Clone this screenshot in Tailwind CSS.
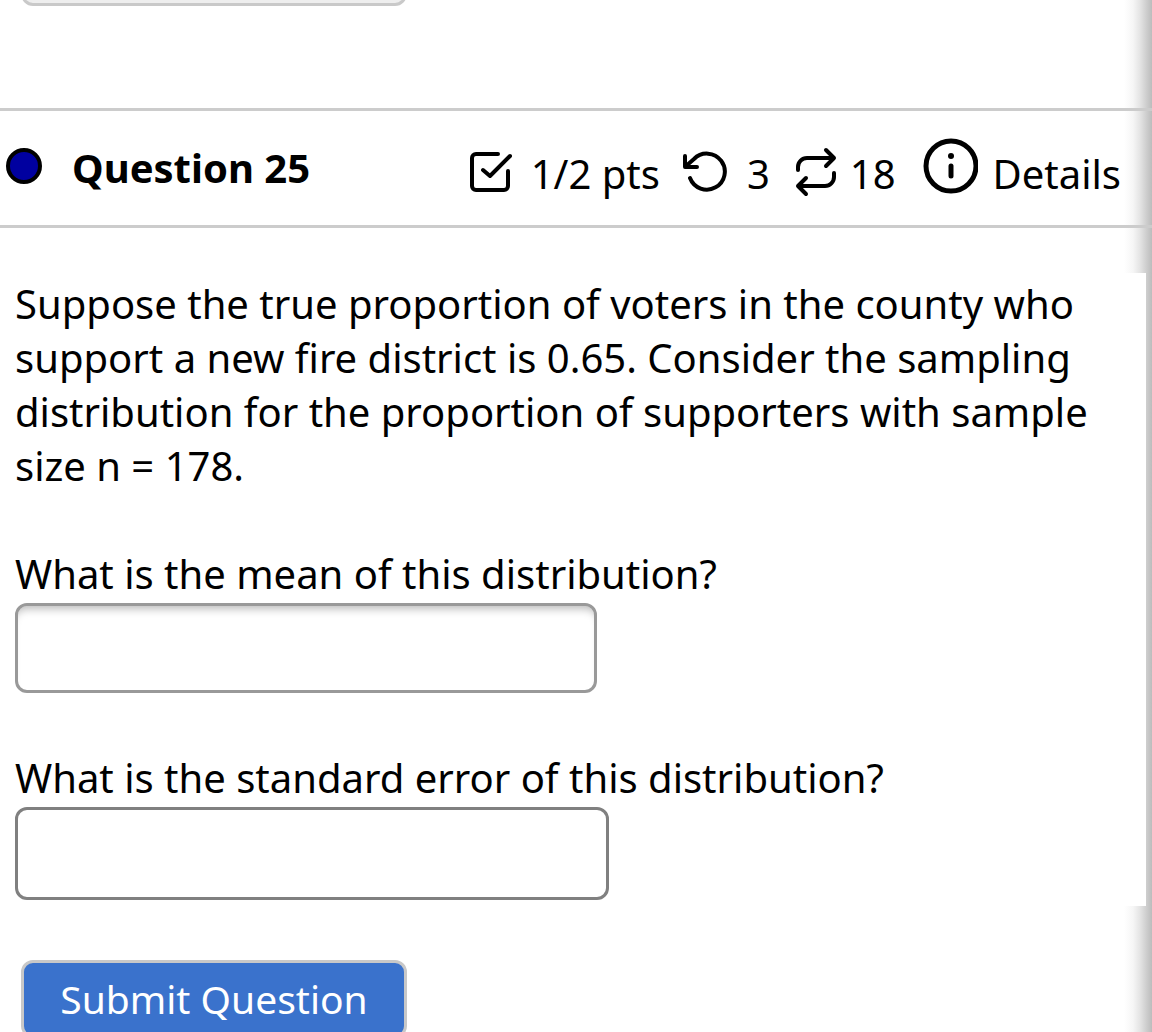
<!DOCTYPE html>
<html lang="en">
<head>
<meta charset="utf-8">
<meta name="viewport" content="width=device-width, initial-scale=1">
<title>Question 25</title>
<script src="https://cdn.jsdelivr.net/npm/@tailwindcss/browser@4"></script>
</head>
<body class="overflow-x-hidden bg-white font-['Trebuchet_MS','Noto_Sans',sans-serif] text-[40px] leading-[54px] text-black">
<main class="flex min-h-screen flex-col bg-[linear-gradient(to_left,#bcbcbc_0px,#cccccc_5px,#e4e4e4_12px,#f6f6f6_19px,#ffffff_28px)]">
  <div class="flex h-[6px] items-end overflow-hidden px-[21px]">
    <div class="h-[78px] w-[386px] shrink-0 rounded-xl border-3 border-[#c9c9c9] bg-[#eeeeee]"></div>
  </div>
  <header class="mt-[102px] flex h-[120px] items-center justify-between border-y-3 border-[#cccccc] pr-[31px] pl-[6px]">
    <div class="flex items-center gap-[30px]">
      <span class="mb-1 size-9 rounded-full border-4 border-black bg-[#0000a0]"></span>
      <h2 class="text-[40px] font-bold whitespace-nowrap">Question 25</h2>
    </div>
    <div class="flex items-center whitespace-nowrap">
      <span class="flex items-center gap-[19px] pt-3">
        <svg class="h-12 w-[42px]" viewBox="0 2 42 48" fill="none" stroke="#000" stroke-width="4" stroke-linecap="round" stroke-linejoin="round"><path d="M28 6H6a4 4 0 0 0-4 4V38a4 4 0 0 0 4 4H34a4 4 0 0 0 4-4V23M13 22l7 6L40 8"/></svg>
        1/2 pts
      </span>
      <span class="ml-[23px] flex items-center gap-[19px] pt-3">
        <svg class="h-12 w-[45px]" viewBox="0 2 45 48" fill="none" stroke="#000" stroke-width="4" stroke-linecap="round" stroke-linejoin="round"><path d="M2 8v11h12M3 18L11 11A18 18 0 1 1 7 30"/></svg>
        3
      </span>
      <span class="ml-[26px] flex items-center gap-3 pt-3">
        <svg class="h-12 w-[42px] overflow-visible" viewBox="0 2 42 48" fill="none" stroke="#000" stroke-width="4" stroke-linecap="round" stroke-linejoin="round"><path d="M2 22V19a9 9 0 0 1 9-9H38M30 2l8 8-8 8M38 25v4a9 9 0 0 1-9 9H2M10 30l-8 8 8 8"/></svg>
        18
      </span>
      <a href="#details" class="ml-[26px] flex items-center gap-[15px]">
        <svg class="mb-1 size-14" viewBox="0 0 56 56" fill="none" stroke="#000" stroke-width="5" stroke-linecap="round"><circle cx="29" cy="28" r="25"/><path d="M29 28v10"/><circle cx="29" cy="18" r="3" fill="#000" stroke="none"/></svg>
        <span class="pt-3">Details</span>
      </a>
    </div>
  </header>
  <form class="flex flex-col">
    <div class="mt-[45px] mr-[6px] flex flex-col items-start bg-white px-[15px] pt-1 pb-[6px]">
      <p class="whitespace-nowrap">Suppose the true proportion of voters in the county who<br>support a new fire district is 0.65. Consider the sampling<br>distribution for the proportion of supporters with sample<br>size n = 178.</p>
      <label for="mean" class="mt-[54px]">What is the mean of this distribution?</label>
      <input id="mean" type="text" class="mt-[2px] h-[90px] w-[582px] rounded-xl border-3 border-[#999999] bg-white px-4 shadow-[inset_0_9px_8px_-6px_#bbbbbb] outline-none">
      <label for="error" class="mt-[58px]">What is the standard error of this distribution?</label>
      <input id="error" type="text" class="mt-[2px] h-[93px] w-[594px] rounded-xl border-3 border-[#808080] bg-white px-4 outline-none">
    </div>
    <div class="h-[126px] overflow-hidden px-[21px] pt-[54px]">
      <button type="submit" class="h-[78px] w-[386px] rounded-xl border-3 border-[#c8c8c8] bg-[#3a72cc] text-[39px] whitespace-nowrap text-white">Submit Question</button>
    </div>
  </form>
</main>
</body>
</html>
